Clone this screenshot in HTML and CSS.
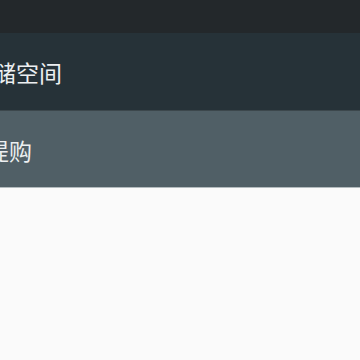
FILE: index.html
```html
<!DOCTYPE html>
<html>
  <head>
    <meta charset="UTF-8">
    <title>Menu</title>
    <link rel="stylesheet" href="styles.css">
  </head>
  <body>
    <div class="topbar"></div>
    <ul class="menu">
      <li class="item"><span class="label">存储空间</span></li>
      <li class="item active"><span class="label">提购</span></li>
    </ul>
    <div class="content"></div>
  </body>
</html>
```

FILE: styles.css
```css
body {
  margin: 0;
  height: 100vh;
  background-color: #fafafa;
  font-family: "Noto Sans CJK SC", "Noto Sans", sans-serif;
  overflow: hidden;
}

.topbar {
  height: 33px;
  background-color: #23282b;
}

.menu {
  list-style: none;
  margin: 0;
  padding: 0;
}

.item {
  display: flex;
  align-items: center;
  height: 77px;
  background-color: #263238;
  color: #eceff1;
  font-size: 23px;
  overflow: hidden;
  white-space: nowrap;
}

.item .label {
  margin-left: -30px; /* text is scrolled off the left edge */
}

.item.active {
  background-color: #505f66;
  border-top: 1px solid #3c474c;
  height: 76px;
  border-bottom: 1px solid #b3bbbe;
}

.item.active .label {
  margin-left: -14px;
  margin-top: 2px;
}
```
